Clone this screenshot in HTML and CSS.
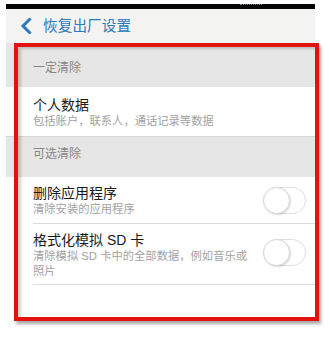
FILE: index.html
```html
<!DOCTYPE html>
<html lang="zh-CN">
<head>
<meta charset="utf-8">
<link rel="stylesheet" href="styles.css">
</head>
<body>
<div class="screen">
  <div class="statusbar"><span class="dots"></span></div>
  <div class="appbar">
    <svg class="back" width="12" height="16" viewBox="0 0 12 16"><polyline points="9.5,1.5 3,8 9.5,14.5" fill="none" stroke="#2e78bf" stroke-width="3" stroke-linecap="square" stroke-linejoin="miter"/></svg>
    <span class="apptitle">恢复出厂设置</span>
  </div>
  <div class="section first">一定清除</div>
  <div class="row r1">
    <div class="texts">
      <div class="title">个人数据</div>
      <div class="sub">包括账户，联系人，通话记录等数据</div>
    </div>
  </div>
  <div class="section second">可选清除</div>
  <div class="row r2 sep">
    <div class="texts">
      <div class="title">删除应用程序</div>
      <div class="sub">清除安装的应用程序</div>
    </div>
    <div class="toggle"><span class="knob"></span></div>
  </div>
  <div class="row r3 sep">
    <div class="texts">
      <div class="title">格式化模拟 SD 卡</div>
      <div class="sub">清除模拟 SD 卡中的全部数据，例如音乐或照片</div>
    </div>
    <div class="toggle up"><span class="knob"></span></div>
  </div>
  <div class="filler"></div>
</div>
<div class="redbox"></div>
</body>
</html>
```
FILE: styles.css
```css
html, body {
  margin: 0;
  padding: 0;
  background: #ffffff;
}
body {
  position: relative;
  width: 330px;
  height: 350px;
  overflow: hidden;
  font-family: "Liberation Sans", "Noto Sans CJK SC", sans-serif;
}
.screen {
  margin: 4px 0 0 6px;
  width: 309px;
  background: #ffffff;
}
.statusbar {
  height: 5px;
  background: #050505;
  position: relative;
}
.dots {
  position: absolute;
  left: 234px;
  top: 0;
  width: 22px;
  height: 2px;
  border-top: 1px dotted #8a8a8a;
}
.appbar {
  height: 34px;
  background: #f3f3f1;
  display: flex;
  align-items: center;
  padding-left: 14px;
}
.back {
  display: block;
  margin-right: 11px;
}
.apptitle {
  font-size: 14.6px;
  color: #2e78bf;
  line-height: 18px;
  letter-spacing: 0.1px;
}
.section {
  background: #e6e6e6;
  color: #868686;
  font-size: 12px;
  line-height: 16px;
  padding-left: 27px;
}
.section.first {
  height: 44px;
  box-sizing: border-box;
  padding-top: 17px;
}
.section.second {
  height: 40px;
  box-sizing: border-box;
  padding-top: 9px;
}
.row {
  display: flex;
  align-items: center;
  background: #ffffff;
  padding-left: 27px;
  padding-right: 9px;
}
.texts {
  flex: 1;
  min-width: 0;
}
.title {
  font-size: 14px;
  line-height: 18px;
  color: #1a1a1a;
}
.sub {
  font-size: 11.3px;
  line-height: 15px;
  color: #a2a2a2;
}
.r1 {
  padding-top: 9px;
  padding-bottom: 7px;
  border-bottom: 1px solid #d6d6d6;
}
.r2 {
  padding-top: 7px;
  padding-bottom: 7px;
}
.r3 {
  padding-top: 7px;
  padding-bottom: 6px;
}
.r3 .texts {
  padding-right: 6px;
}
.sep {
  position: relative;
}
.sep::after {
  content: "";
  position: absolute;
  left: 27px;
  right: 0;
  bottom: 0;
  height: 1px;
  background: #dcdcdc;
}
.toggle {
  width: 43px;
  height: 27px;
  box-sizing: border-box;
  border: 1px solid #dedede;
  border-radius: 14px;
  background: #ffffff;
  position: relative;
  flex: none;
  margin-left: 6px;
}
.toggle.up {
  margin-bottom: 6px;
}
.knob {
  position: absolute;
  left: -1px;
  top: -1px;
  width: 27px;
  height: 27px;
  box-sizing: border-box;
  border-radius: 50%;
  border: 1px solid #d8d8d8;
  background: #ffffff;
  box-shadow: 1px 1px 2px rgba(0, 0, 0, 0.15);
}
.filler {
  height: 33px;
  background: #ffffff;
}
.redbox {
  position: absolute;
  left: 14px;
  top: 43px;
  width: 305px;
  height: 278px;
  box-sizing: border-box;
  border: 4px solid #e2120f;
  box-shadow: 2px 3px 3px rgba(0, 0, 0, 0.35), inset 3px 2px 3px rgba(0, 0, 0, 0.18);
  pointer-events: none;
}
```
